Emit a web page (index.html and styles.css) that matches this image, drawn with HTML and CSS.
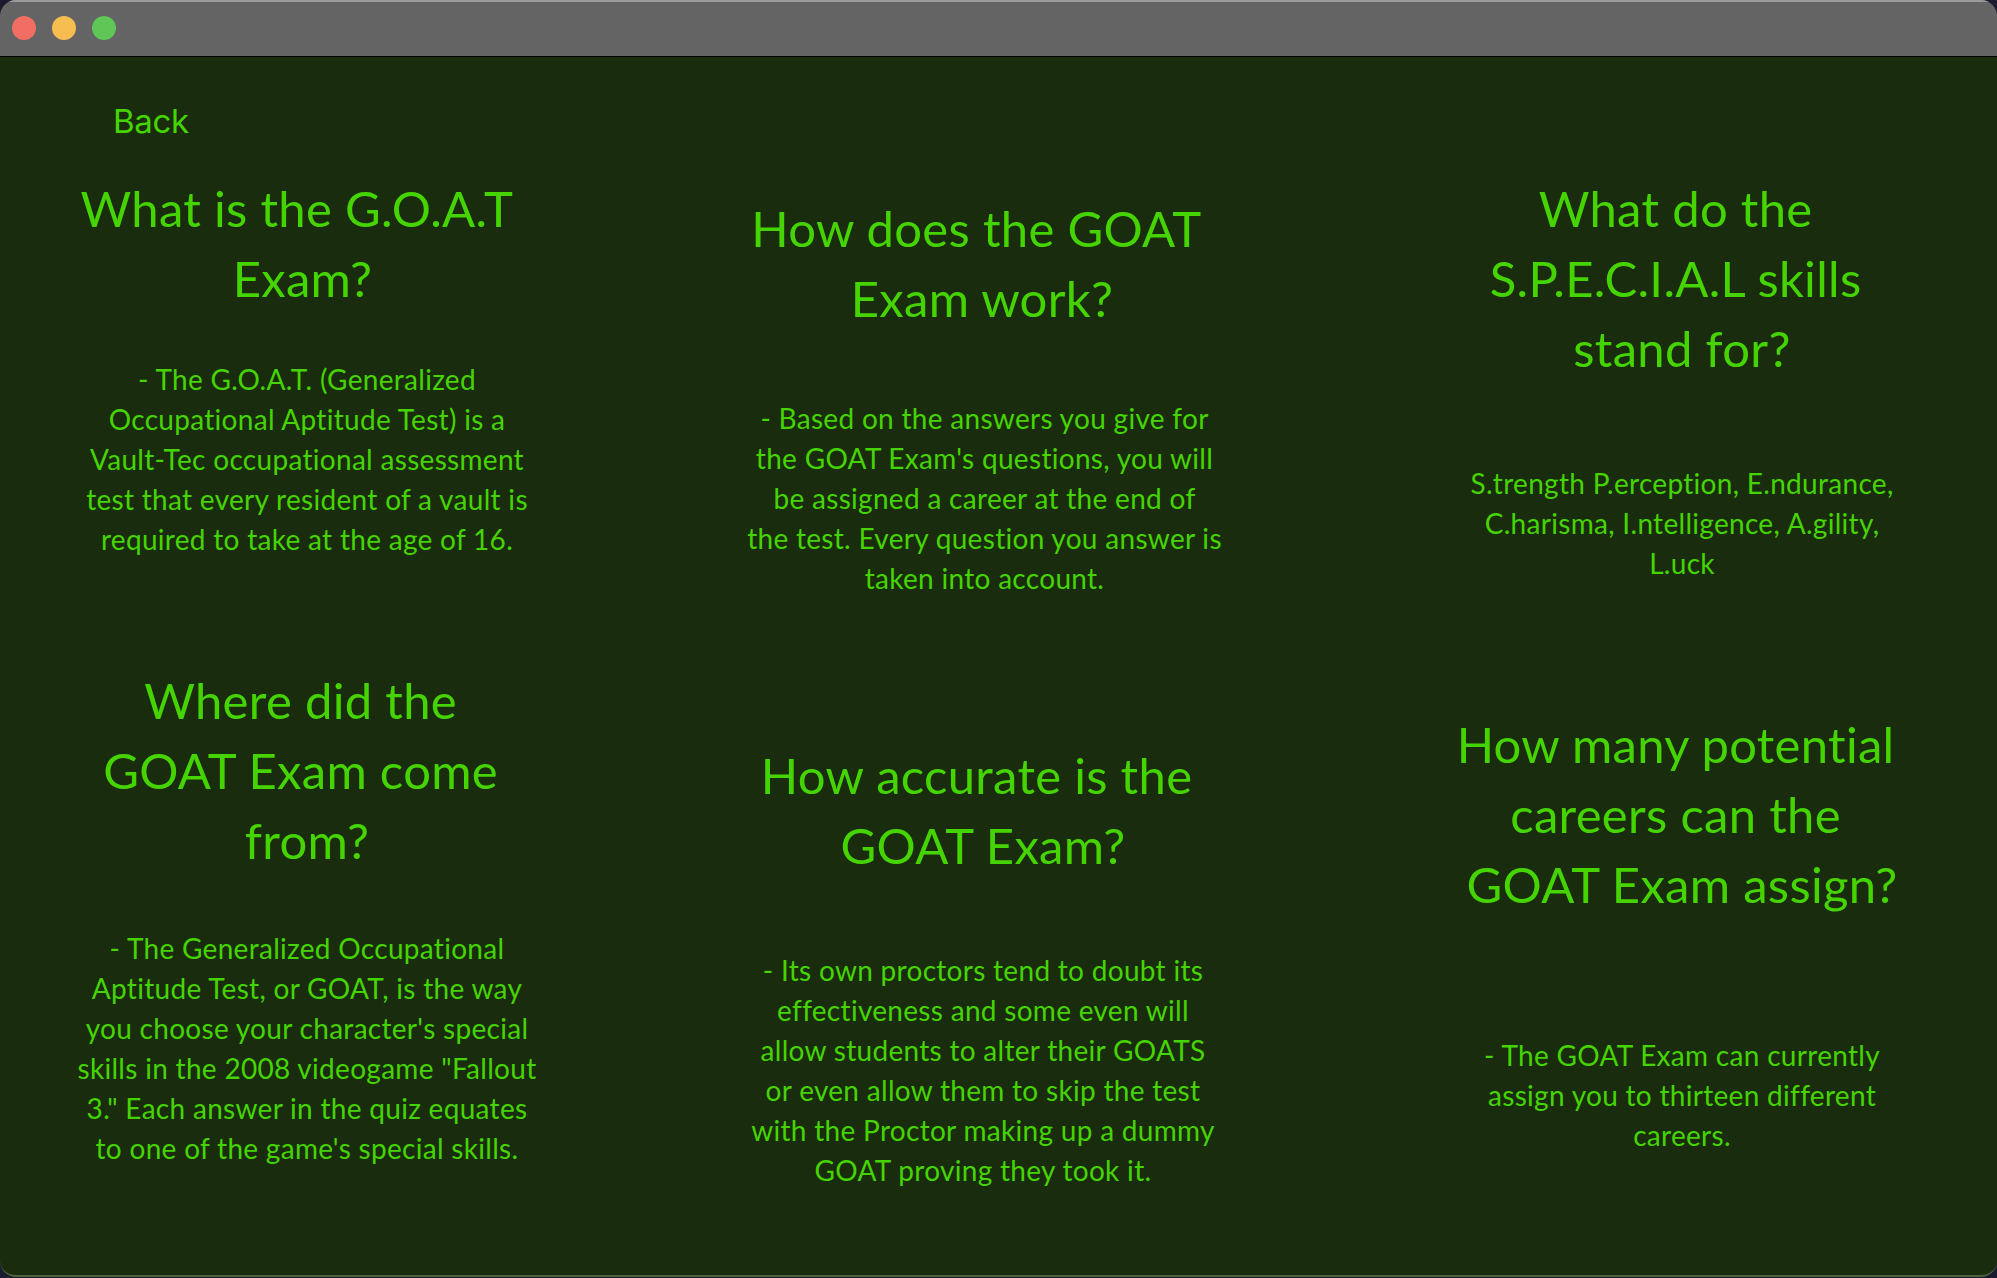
FILE: index.html
```html
<!DOCTYPE html>
<html lang="en">
<head>
  <meta charset="UTF-8" />
  <title>GOAT Exam FAQ</title>
  <link rel="stylesheet" href="styles.css">
</head>
<body>
  <div class="window">
    <div class="titlebar">
      <span class="dot red"></span>
      <span class="dot yellow"></span>
      <span class="dot green"></span>
    </div>
    <div class="content">
      <div class="back">Back</div>
      <div class="faq">
        <div class="card card-a">
          <h2>What is the G.O.A.T 
Exam?</h2>
          <p>- The G.O.A.T. (Generalized
Occupational Aptitude Test) is a
Vault-Tec occupational assessment
test that every resident of a vault is
required to take at the age of 16.</p>
        </div>
        <div class="card card-b">
          <h2>How does the GOAT 
Exam work?</h2>
          <p>- Based on the answers you give for
the GOAT Exam's questions, you will
be assigned a career at the end of
the test. Every question you answer is
taken into account.</p>
        </div>
        <div class="card card-c">
          <h2>What do the 
S.P.E.C.I.A.L skills 
stand for?</h2>
          <p>S.trength P.erception, E.ndurance,
C.harisma, I.ntelligence, A.gility,
L.uck</p>
        </div>
        <div class="card card-d">
          <h2>Where did the 
GOAT Exam come 
from?</h2>
          <p>- The Generalized Occupational
Aptitude Test, or GOAT, is the way
you choose your character's special
skills in the 2008 videogame "Fallout
3." Each answer in the quiz equates
to one of the game's special skills.</p>
        </div>
        <div class="card card-e">
          <h2>How accurate is the 
GOAT Exam?</h2>
          <p>- Its own proctors tend to doubt its
effectiveness and some even will
allow students to alter their GOATS
or even allow them to skip the test
with the Proctor making up a dummy
GOAT proving they took it.</p>
        </div>
        <div class="card card-f">
          <h2>How many potential 
careers can the 
GOAT Exam assign?</h2>
          <p>- The GOAT Exam can currently
assign you to thirteen different
careers.</p>
        </div>
      </div>
    </div>
  </div>
</body>
</html>
```

FILE: styles.css
```css
:root {
  --desk: #1a1b2e;
  --panel: #1a2c0e;
  --bar: #646464;
  --text: #46d400;
}

html,
body {
  height: 100%;
}

body {
  margin: 0;
  background: var(--desk);
  font-family: 'Lato', sans-serif;
  font-variant-ligatures: none;
  color: var(--text);
  overflow: hidden;
}

.window {
  height: 1277px;
  box-sizing: border-box;
  border-radius: 16px;
  overflow: hidden;
  display: flex;
  flex-direction: column;
  background: var(--panel);
  border-bottom: 2px solid #4b6340;
}

.titlebar {
  height: 57px;
  box-sizing: border-box;
  flex: none;
  background: var(--bar);
  border-top: 2px solid #9a9a9a;
  border-bottom: 1px solid #000;
  padding: 0 0 2px 12px;
  display: flex;
  align-items: center;
  gap: 16px;
}

.dot {
  width: 24px;
  height: 24px;
  border-radius: 50%;
}

.dot.red { background: #f26d64; }
.dot.yellow { background: #f6bd50; }
.dot.green { background: #60c757; }

.content {
  flex: 1;
}

.back {
  font-family: 'Inter', sans-serif;
  font-size: 33px;
  line-height: 40px;
  letter-spacing: -0.3px;
  height: 116px;
  box-sizing: border-box;
  padding: 44px 0 0 113px;
}

.faq {
  display: grid;
  grid-template-columns: 584px 768px 630px;
  grid-template-rows: 492px auto;
  padding-left: 15px;
}

.card {
  text-align: center;
}

h2 {
  margin: 0;
  font-size: 49px;
  line-height: 70px;
  font-weight: 400;
  letter-spacing: 0.3px;
  white-space: pre;
}

p {
  margin: 0;
  font-size: 28px;
  line-height: 40px;
  letter-spacing: 0.3px;
  white-space: pre;
}

/* heading and text boxes sit at different heights in every card */
.card-a h2 { padding-right: 9px; }
.card-a p { margin-top: 46px; }
.card-b { padding-top: 20px; }
.card-b h2 { padding-right: 2px; }
.card-b p { margin-top: 65px; padding-left: 3px; }
.card-c p { margin-top: 80px; }
.card-d p { margin-top: 53px; }
.card-e { padding-top: 75px; }
.card-e p { margin-top: 70px; }
.card-f { padding-top: 44px; }
.card-f p { margin-top: 116px; }
```
